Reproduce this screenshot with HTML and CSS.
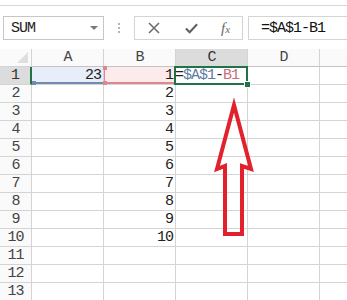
FILE: index.html
```html
<html>
<head>
	<title>sheet</title>
	<link rel="stylesheet" href="styles.css">
</head>
<body>

<div class="ribbon"></div>

<div class="fbar">
	<div class="namebox"><span>SUM</span><span class="drop"></span></div>
	<div class="dots"><i></i><i></i><i></i></div>
	<div class="btns">
		<span class="ico">
			<svg width="12" height="12" viewBox="0 0 12 12"><path d="M1 1 L11 11 M11 1 L1 11" stroke="#6e6e6e" stroke-width="1.6" fill="none"/></svg>
		</span>
		<span class="ico">
			<svg width="14" height="11" viewBox="0 0 14 11"><path d="M1 5.5 L5 9.5 L13 1" stroke="#5f5f5f" stroke-width="2.2" fill="none"/></svg>
		</span>
		<span class="ico fx">f<sub>x</sub></span>
	</div>
	<div class="input">=$A$1-B1</div>
</div>

<div class="sheet">
	<div class="corner"><span class="tri"></span></div>
	<div class="ch">A</div>
	<div class="ch">B</div>
	<div class="ch sel">C</div>
	<div class="ch">D</div>
	<div class="ch last"></div>

	<div class="rh sel">1</div>
	<div class="c num refa">23</div>
	<div class="c num refb">1</div>
	<div class="c act"><span>=</span><span class="ta">$A$1</span><span>-</span><span class="tb">B1</span></div>
	<div class="c"></div>
	<div class="c last"></div>
</div>

<svg class="arrow" width="347" height="300" viewBox="0 0 347 300">
	<polygon points="234,105 251,169 242,166 242,234 225,234 225,166 217,169" fill="none" stroke="#e1212b" stroke-width="4" stroke-linejoin="miter"/>
</svg>

<script type="text/javascript">
	// rows 2..13, column B holds 1..10
	var sheet = document.querySelector(".sheet");
	for(var r=2;r<=13;r++){
		var html = '<div class="rh">'+r+'</div><div class="c"></div>';
		html += '<div class="c num">'+(r<=10 ? r : '')+'</div>';
		html += '<div class="c"></div><div class="c"></div><div class="c last"></div>';
		sheet.insertAdjacentHTML("beforeend", html);
	}
</script>

</body>
</html>
```

FILE: styles.css
```css
body{
	margin:0;
	background:#fff;
	font-family:"Liberation Mono", monospace;
	font-size:15px;
	color:#222;
	width:347px;
	height:300px;
	overflow:hidden;
	position:relative;
}
.ribbon{
	height:5px;
	border-bottom:1px solid #d6d6d6;
}

.fbar{
	display:flex;
	margin-top:10px;
	height:24px;
	padding-left:3px;
}
.namebox{
	width:101px;
	box-sizing:border-box;
	border:1px solid #c6c6c6;
	display:flex;
	align-items:center;
	justify-content:space-between;
	padding:0 5px 0 7px;
	letter-spacing:-1px;
}
.drop{
	width:0;
	height:0;
	border-left:4px solid transparent;
	border-right:4px solid transparent;
	border-top:4px solid #7a7a7a;
}
.dots{
	width:30px;
	display:flex;
	flex-direction:column;
	align-items:center;
	justify-content:center;
	gap:2px;
}
.dots i{
	display:block;
	width:2px;
	height:2px;
	background:#b4b4b4;
}
.btns{
	width:109px;
	box-sizing:border-box;
	border:1px solid #d4d4d4;
	display:flex;
	align-items:center;
	padding-left:13px;
	gap:24px;
}
.ico{
	display:flex;
	align-items:center;
	width:13px;
}
.fx{
	font-family:"Liberation Serif", serif;
	font-style:italic;
	font-size:15px;
	color:#6a6a6a;
	margin-left:-1px;
}
.fx sub{
	font-size:11px;
	vertical-align:0;
	position:relative;
	top:1px;
}
.input{
	flex:1;
	margin-left:5px;
	border:1px solid #d4d4d4;
	border-right:0;
	display:flex;
	align-items:center;
	padding-left:12px;
	letter-spacing:-1px;
	color:#111;
}

.sheet{
	margin-top:9px;
	display:grid;
	grid-template-columns:32px 72px 72px 72px 72px 27px;
	grid-auto-rows:18px;
}
.sheet > div{
	box-sizing:border-box;
	border-right:1px solid #d4d4d4;
	border-bottom:1px solid #d4d4d4;
	display:flex;
	align-items:center;
	letter-spacing:-1px;
	position:relative;
}
.sheet > .last{border-right:0;}
.ch,.corner,.rh{
	background:#fafafa;
	justify-content:center;
	color:#444;
}
.ch{border-bottom-color:#c4c4c4 !important;}
.ch.sel{
	background:#dcdcdc;
	color:#333;
}
.rh.sel{
	background:#dcdcdc;
	color:#333;
	border-right:2px solid #217346 !important;
}
.tri{
	position:absolute;
	right:3px;
	bottom:3px;
	width:0;
	height:0;
	border-left:11px solid transparent;
	border-bottom:11px solid #dfdfdf;
}
.num{
	justify-content:flex-end;
	padding-right:2px;
}
.refa{
	background:#e7eef9;
	box-shadow:inset 0 -2px 0 #6f8cae;
}
.refb{
	background:#fdeaea;
	box-shadow:inset 0 -2px 0 #de8790, inset 1px 0 0 #de8790;
}
.refa::after,.refb::after,.refb::before,.act::after{
	content:"";
	position:absolute;
	width:4px;
	height:4px;
}
.refa::after{left:0;bottom:-1px;background:#6f8cae;}
.refb::before{left:-1px;top:-1px;background:#de8790;}
.refb::after{left:-1px;bottom:-1px;background:#de8790;}
.act{
	padding-left:1px;
	box-shadow:inset 0 0 0 2px #217346;
	margin:-1px 0 0 -2px;
	width:74px;
	height:19px;
	border:0 !important;
	z-index:2;
}
.act::after{
	right:-3px;
	bottom:-3px;
	width:5px;
	height:5px;
	background:#217346;
	border:1px solid #fff;
}
.ta{color:#5b7ba0;}
.tb{color:#c96f7a;}

.arrow{
	position:absolute;
	left:0;
	top:0;
	pointer-events:none;
}
```
